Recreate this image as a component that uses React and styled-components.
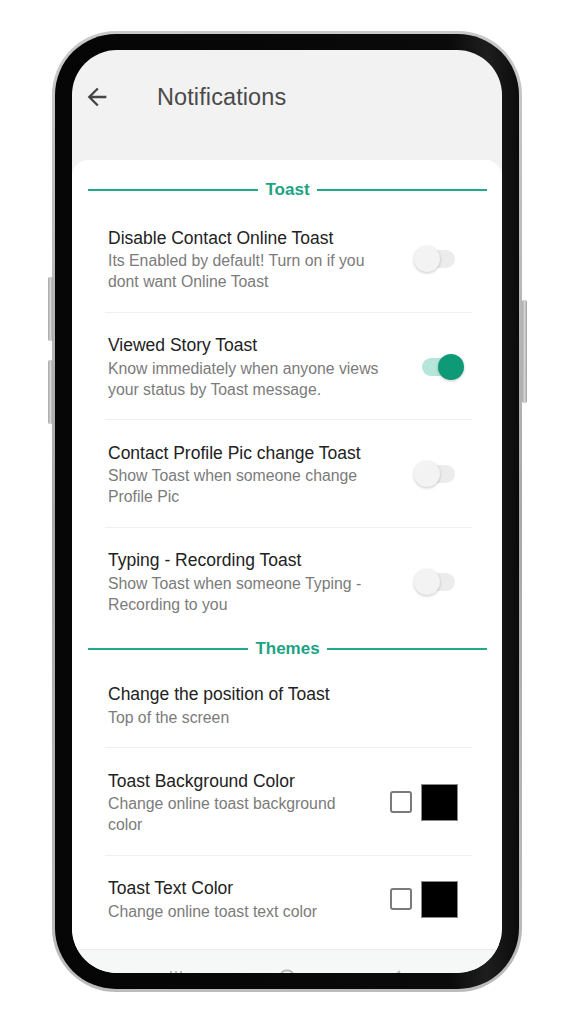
import React from "react";
import styled, { createGlobalStyle } from "styled-components";

const Global = createGlobalStyle`
  html, body { margin: 0; padding: 0; background: #ffffff; }
  body { font-family: "Liberation Sans", Arial, sans-serif; }
  * { box-sizing: border-box; }
`;

const Page = styled.div`
  width: 576px;
  height: 1024px;
  padding: 31px 0 0 52px;
  overflow: hidden;
`;

const Phone = styled.div`
  position: relative;
  width: 470px;
  height: 961px;
  border-radius: 64px;
  padding: 3px;
  background: linear-gradient(180deg, #c9c9c9 0%, #a9a9a9 50%, #bcbcbc 100%);
`;

const SideButton = styled.div`
  position: absolute;
  width: 5px;
  border-radius: 2px;
  background: linear-gradient(90deg, #a5a5a5, #d6d6d6, #a0a0a0);
  top: ${(p) => p.$top}px;
  height: ${(p) => p.$h}px;
  ${(p) => (p.$side === "left" ? "left: -4px;" : "right: -5px;")}
`;

const Bezel = styled.div`
  width: 100%;
  height: 100%;
  border-radius: 61px;
  background: linear-gradient(90deg, #050505 0%, #0a0a0a 85%, #1e1e1e 93%, #0b0b0b 100%);
  padding: 16px 17px 16px 17px;
`;

const Screen = styled.div`
  width: 100%;
  height: 100%;
  border-radius: 45px;
  overflow: hidden;
  background: #f2f2f2;
  display: flex;
  flex-direction: column;
`;

const Toolbar = styled.div`
  height: 94px;
  flex: none;
  display: flex;
  align-items: center;
  padding-left: 11px;
`;

const BackButton = styled.div`
  width: 28px;
  height: 28px;
  display: flex;
  color: #444;
  margin-right: 46px;
`;

const ToolbarTitle = styled.div`
  font-size: 23.5px;
  color: #4a4a4a;
  letter-spacing: 0.1px;
`;

const Spacer = styled.div`
  height: 16px;
  flex: none;
`;

const Card = styled.div`
  flex: 1;
  background: #ffffff;
  border-radius: 16px 16px 0 0;
  padding-top: 15px;
  border-bottom: 1px solid #ececec;
  display: flex;
  flex-direction: column;
`;

const SectionHeader = styled.div`
  height: 30px;
  flex: none;
  margin: 0 15px 0 16px;
  display: flex;
  align-items: center;
  gap: 7px;
`;

const SectionLine = styled.div`
  flex: 1;
  height: 2.5px;
  background: #22a98c;
`;

const SectionTitle = styled.div`
  font-size: 17px;
  font-weight: 700;
  color: #1ca383;
`;

const Row = styled.div`
  display: flex;
  align-items: center;
  flex: none;
  margin: 0 30px 0 33px;
  padding: ${(p) => p.$padTop}px ${(p) => p.$padRight}px 19.5px 3px;
  border-bottom: ${(p) => (p.$last ? "none" : "1px solid #f0f0f0")};
`;

const TextBlock = styled.div`
  flex: 1;
  max-width: 277px;
  display: flex;
  flex-direction: column;
`;

const Title = styled.div`
  font-size: 17.5px;
  line-height: 22px;
  color: #222222;
`;

const Subtitle = styled.div`
  font-size: 15.8px;
  line-height: 21px;
  margin-top: ${(p) => (p.$first ? "1.5px" : "0")};
  color: #7b7b7b;
`;

const Controls = styled.div`
  margin-left: auto;
  display: flex;
  align-items: center;
  gap: 9px;
`;

const SwitchBox = styled.div`
  position: relative;
  width: 50px;
  height: 26px;
`;

const Track = styled.div`
  position: absolute;
  left: 8px;
  right: 9px;
  top: 4px;
  height: 18px;
  border-radius: 9px;
  background: ${(p) => (p.$on ? "#b5e6d9" : "#ececec")};
`;

const Thumb = styled.div`
  position: absolute;
  top: 0;
  ${(p) => (p.$on ? "right: 0;" : "left: 0;")}
  width: 26px;
  height: 26px;
  border-radius: 50%;
  background: ${(p) => (p.$on ? "#0f9a77" : "#f3f3f3")};
  box-shadow: 0 1px 3px rgba(0, 0, 0, 0.22);
`;

const CheckBox = styled.div`
  width: 22px;
  height: 22px;
  border: 2.5px solid #7a7a7a;
  border-radius: 3px;
  background: #fff;
`;

const Swatch = styled.div`
  width: 37px;
  height: 37px;
  background: ${(p) => p.$color};
  border: 1px solid #8a8a8a;
`;

const NavBar = styled.div`
  height: 23px;
  flex: none;
  background: #f6f7f7;
  display: flex;
  justify-content: space-between;
  align-items: flex-start;
  padding: 19px 96px 0 96px;
`;

const NavIcon = styled.div`
  width: 16px;
  height: 16px;
  color: #b8b8b8;
  display: flex;
`;

function Switch({ on }) {
  return (
    <SwitchBox>
      <Track $on={on} />
      <Thumb $on={on} />
    </SwitchBox>
  );
}

function SettingRow({ title, lines, control, last, padTop = 21.5 }) {
  let ctrl = null;
  let padRight = 0;
  if (control === "on" || control === "off") {
    ctrl = <Switch on={control === "on"} />;
    padRight = 8;
  } else if (control === "color") {
    ctrl = (
      <>
        <CheckBox />
        <Swatch $color="#000" />
      </>
    );
    padRight = 14;
  }
  return (
    <Row $last={last} $padRight={padRight} $padTop={padTop}>
      <TextBlock>
        <Title>{title}</Title>
        {lines.map((l, i) => (
          <Subtitle key={i} $first={i === 0}>
            {l}
          </Subtitle>
        ))}
      </TextBlock>
      {ctrl && <Controls>{ctrl}</Controls>}
    </Row>
  );
}

function Section({ title }) {
  return (
    <SectionHeader>
      <SectionLine />
      <SectionTitle>{title}</SectionTitle>
      <SectionLine />
    </SectionHeader>
  );
}

export default function App() {
  return (
    <>
      <Global />
      <Page>
        <Phone>
          <SideButton $side="left" $top={246} $h={64} />
          <SideButton $side="left" $top={329} $h={64} />
          <SideButton $side="right" $top={269} $h={103} />
          <Bezel>
            <Screen>
              <Toolbar>
                <BackButton>
                  <svg width="28" height="28" viewBox="0 0 24 24" fill="currentColor">
                    <path d="M20 11H7.83l5.59-5.59L12 4l-8 8 8 8 1.41-1.41L7.83 13H20v-2z" />
                  </svg>
                </BackButton>
                <ToolbarTitle>Notifications</ToolbarTitle>
              </Toolbar>
              <Spacer />
              <Card>
                <Section title="Toast" />
                <SettingRow
                  title="Disable Contact Online Toast"
                  lines={["Its Enabled by default! Turn on if you", "dont want Online Toast"]}
                  control="off"
                />
                <SettingRow
                  title="Viewed Story Toast"
                  lines={["Know immediately when anyone views", "your status by Toast message."]}
                  control="on"
                />
                <SettingRow
                  title="Contact Profile Pic change Toast"
                  lines={["Show Toast when someone change", "Profile Pic"]}
                  control="off"
                />
                <SettingRow
                  title="Typing - Recording Toast"
                  lines={["Show Toast when someone Typing -", "Recording to you"]}
                  control="off"
                  last
                />
                <Section title="Themes" />
                <SettingRow
                  title="Change the position of Toast"
                  lines={["Top of the screen"]}
                  padTop={19}
                />
                <SettingRow
                  title="Toast Background Color"
                  lines={["Change online toast background", "color"]}
                  control="color"
                />
                <SettingRow
                  title="Toast Text Color"
                  lines={["Change online toast text color"]}
                  control="color"
                  last
                />
              </Card>
              <NavBar>
                <NavIcon>
                  <svg width="16" height="16" viewBox="0 0 16 16" fill="none" stroke="currentColor" strokeWidth="2">
                    <path d="M3 2v12M8 2v12M13 2v12" />
                  </svg>
                </NavIcon>
                <NavIcon>
                  <svg width="16" height="16" viewBox="0 0 16 16" fill="none" stroke="currentColor" strokeWidth="2">
                    <rect x="2" y="1.5" width="12" height="12" rx="5" />
                  </svg>
                </NavIcon>
                <NavIcon>
                  <svg width="16" height="16" viewBox="0 0 16 16" fill="none" stroke="currentColor" strokeWidth="2">
                    <path d="M10 2L4 8l6 6" />
                  </svg>
                </NavIcon>
              </NavBar>
            </Screen>
          </Bezel>
        </Phone>
      </Page>
    </>
  );
}
